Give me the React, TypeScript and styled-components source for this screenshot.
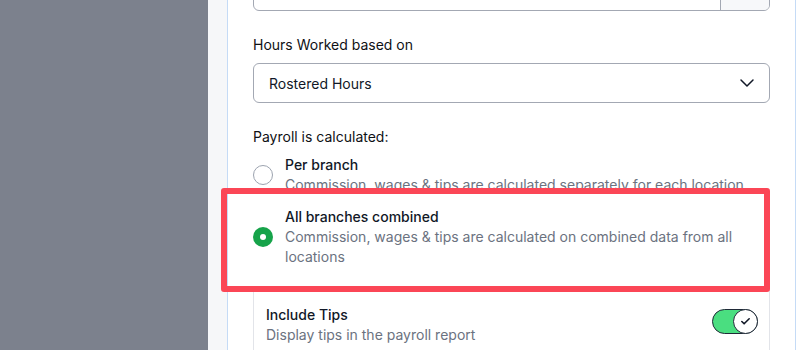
import styled, { createGlobalStyle } from 'styled-components';
import { Check, ChevronDown, CalendarDays } from 'lucide-react';

const GlobalStyle = createGlobalStyle`
  html, body {
    margin: 0;
    padding: 0;
    background: #ffffff;
    overflow: hidden;
  }
  body {
    font-family: Inter, "Noto Sans", "Liberation Sans", sans-serif;
    color: #111827;
    -webkit-font-smoothing: antialiased;
  }
`;

const Page = styled.div`
  display: flex;
  align-items: flex-start;
  height: 350px;
  width: 797px;
  overflow: hidden;
`;

const Sidebar = styled.div`
  flex: 0 0 208px;
  align-self: stretch;
  background: #7c818d;
`;

const Gutter = styled.div`
  flex: 0 0 19px;
  align-self: stretch;
  background: #f6f7f9;
`;

const Panel = styled.div`
  flex: 0 0 569px;
  box-sizing: border-box;
  background: #ffffff;
  border-left: 1px solid #c5dbf6;
  border-right: 1px solid #c5dbf6;
  padding: 0 25px 0 25px;
  display: flex;
  flex-direction: column;
  margin-top: -29px;
  min-height: 400px;
`;

const InputGroup = styled.div`
  display: flex;
  height: 40px;
  box-sizing: border-box;
  border: 1px solid #a3a8b3;
  border-radius: 6px;
  overflow: hidden;
`;

const InputField = styled.div`
  flex: 1;
`;

const Addon = styled.div`
  flex: 0 0 48px;
  border-left: 1px solid #a3a8b3;
  background: #f7f8fa;
  display: flex;
  align-items: center;
  justify-content: center;
  color: #9ca3af;
`;

const Label = styled.div`
  margin-top: 24px;
  font-size: 14px;
  line-height: 20px;
  font-weight: 400;
  color: #0f1115;
`;

const Select = styled.div`
  margin-top: 8px;
  height: 40px;
  box-sizing: border-box;
  border: 1px solid #a3a8b3;
  border-radius: 6px;
  display: flex;
  align-items: center;
  justify-content: space-between;
  padding: 0 10px 0 15px;
  font-size: 14px;
  color: #111827;
`;

const RadioGroup = styled.div`
  display: flex;
  flex-direction: column;
  gap: 12px;
  margin-top: 8px;
`;

const Option = styled.div`
  position: relative;
  display: flex;
  align-items: center;
  gap: 12px;
`;

const Radio = styled.span<{ $checked?: boolean }>`
  flex: 0 0 auto;
  width: 20px;
  height: 20px;
  box-sizing: border-box;
  border-radius: 50%;
  border: ${p => (p.$checked ? 'none' : '1px solid #9ca3af')};
  background: ${p => (p.$checked ? '#16a34a' : '#ffffff')};
  display: flex;
  align-items: center;
  justify-content: center;
  &::after {
    content: '';
    display: ${p => (p.$checked ? 'block' : 'none')};
    width: 6px;
    height: 6px;
    border-radius: 50%;
    background: #ffffff;
  }
`;

const OptionText = styled.div`
  display: flex;
  flex-direction: column;
  padding-right: 24px;
`;

const Title = styled.div`
  font-size: 14px;
  line-height: 20px;
  font-weight: 500;
  color: #111827;
`;

const Desc = styled.div`
  font-size: 14px;
  line-height: 20px;
  color: #6b7280;
`;

const Highlight = styled.div`
  position: absolute;
  top: -19px;
  bottom: -25px;
  left: -32px;
  right: 0;
  border: 6px solid #fb4656;
  border-radius: 3px;
  pointer-events: none;
`;

const Card = styled.div`
  margin-top: 23px;
  border: 1px solid #e2e4e9;
  border-bottom: none;
  padding: 14px 11px 0 12px;
  display: flex;
  justify-content: space-between;
  align-items: flex-start;
  height: 80px;
`;

const Toggle = styled.span<{ $on?: boolean }>`
  margin-top: 4px;
  width: 46px;
  height: 25px;
  box-sizing: border-box;
  border-radius: 13px;
  border: 1px solid #1f2937;
  background: ${p => (p.$on ? '#4ade80' : '#e5e7eb')};
  display: flex;
  justify-content: ${p => (p.$on ? 'flex-end' : 'flex-start')};
  align-items: center;
`;

const Knob = styled.span`
  width: 25px;
  height: 25px;
  margin: -1px;
  box-sizing: border-box;
  border-radius: 50%;
  border: 1.5px solid #1f2937;
  background: #ffffff;
  display: flex;
  align-items: center;
  justify-content: center;
  color: #111827;
`;

export default function App() {
  return (
    <>
      <GlobalStyle />
      <Page>
        <Sidebar />
        <Gutter />
        <Panel>
          <InputGroup>
            <InputField />
            <Addon>
              <CalendarDays size={16} strokeWidth={1.5} />
            </Addon>
          </InputGroup>

          <Label>Hours Worked based on</Label>
          <Select>
            <span>Rostered Hours</span>
            <ChevronDown size={24} strokeWidth={1.5} color="#111827" />
          </Select>

          <Label>Payroll is calculated:</Label>
          <RadioGroup>
            <Option>
              <Radio />
              <OptionText>
                <Title>Per branch</Title>
                <Desc>Commission, wages &amp; tips are calculated separately for each location</Desc>
              </OptionText>
            </Option>
            <Option>
              <Radio $checked />
              <OptionText>
                <Title>All branches combined</Title>
                <Desc>Commission, wages &amp; tips are calculated on combined data from all locations</Desc>
              </OptionText>
              <Highlight />
            </Option>
          </RadioGroup>

          <Card>
            <OptionText>
              <Title>Include Tips</Title>
              <Desc>Display tips in the payroll report</Desc>
            </OptionText>
            <Toggle $on>
              <Knob>
                <Check size={11} strokeWidth={3.5} />
              </Knob>
            </Toggle>
          </Card>
        </Panel>
      </Page>
    </>
  );
}
